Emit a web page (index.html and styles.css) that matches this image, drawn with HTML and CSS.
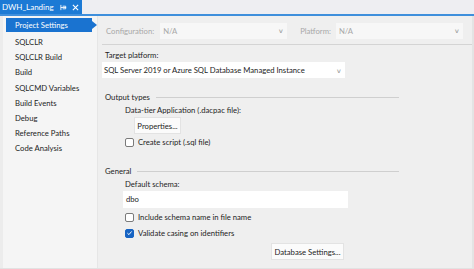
FILE: index.html
```html
<!DOCTYPE html>
<html>
<head>
<meta charset="utf-8">
<link rel="stylesheet" href="styles.css">
</head>
<body>
<div class="tabbar">
  <div class="tab"><span class="tab-title">DWH_Landing</span><svg class="pin" viewBox="0 0 8 8" width="7" height="7"><path d="M1 1 V7 M1 4 H7 M3 2.5 H6.5 V5.5 H3" fill="none" stroke="#fff" stroke-width="1"/></svg><svg class="close" viewBox="0 0 8 8" width="7" height="7"><path d="M1 1 L7 7 M7 1 L1 7" stroke="#fff" stroke-width="1.3"/></svg></div>
</div>
<div class="window">
  <div class="sidebar">
    <div class="nav selected">Project Settings</div>
    <div class="nav">SQLCLR</div>
    <div class="nav">SQLCLR Build</div>
    <div class="nav">Build</div>
    <div class="nav">SQLCMD Variables</div>
    <div class="nav">Build Events</div>
    <div class="nav">Debug</div>
    <div class="nav">Reference Paths</div>
    <div class="nav">Code Analysis</div>
  </div>
  <div class="main">
    <div class="configrow">
      <span class="dim lbl-config">Configuration:</span>
      <div class="combo dim combo-config"><span>N/A</span><span class="chev">&#x2228;</span></div>
      <span class="dim lbl-platform">Platform:</span>
      <div class="combo dim combo-platform"><span>N/A</span><span class="chev">&#x2228;</span></div>
    </div>
    <div class="content">
      <div class="label">Target platform:</div>
      <div class="combo target"><span>SQL Server 2019 or Azure SQL Database Managed Instance</span><span class="chev">&#x2228;</span></div>

      <div class="group group-output"><span>Output types</span><span class="rule"></span></div>
      <div class="indent">
        <div class="label">Data-tier Application (.dacpac file):</div>
        <div class="btn btn-props">Properties...</div>
        <label class="check"><span class="box"></span>Create script (.sql file)</label>
      </div>

      <div class="group group-general"><span>General</span><span class="rule"></span></div>
      <div class="indent">
        <div class="label">Default schema:</div>
        <div class="input">dbo</div>
        <label class="check check-1"><span class="box"></span>Include schema name in file name</label>
        <label class="check check-2"><span class="box on"><svg viewBox="0 0 10 10" width="8" height="8"><path d="M2 5.2 L4.2 7.3 L8 2.8" fill="none" stroke="#fff" stroke-width="1.4"/></svg></span>Validate casing on identifiers</label>
        <div class="btnrow"><div class="btn btn-db">Database Settings...</div></div>
      </div>
    </div>
  </div>
</div>
</body>
</html>
```
FILE: styles.css
```css
* { box-sizing: border-box; }
html, body { margin: 0; padding: 0; }
body {
  width: 474px;
  height: 269px;
  overflow: hidden;
  background: #eeeef2;
  font-family: Lato, "Noto Sans", sans-serif;
  font-size: 7.7px;
  color: #1e1e1e;
  white-space: nowrap;
}
.tabbar {
  height: 16px;
  background: #eeeef2;
  border-bottom: 2px solid #3f8fdc;
  display: flex;
}
.tab {
  background: #1c7ad5;
  color: #fff;
  width: 82px;
  height: 14px;
  display: flex;
  align-items: center;
  padding-left: 2px;
  font-size: 8px;
}
.tab-title { flex: none; }
.pin { margin-left: 6px; flex: none; }
.close { margin-left: 5px; flex: none; }
.window {
  display: flex;
  height: 253px;
  border-bottom: 1px solid #e2e2e2;
}
.sidebar {
  width: 98px;
  background: #f5f5f5;
  border-left: 3px solid #ececec;
  border-right: 1px solid #e6e6e6;
  padding-top: 2px;
}
.nav {
  height: 15.2px;
  line-height: 15.2px;
  padding-left: 9px;
  margin-left: 3px;
  color: #1e1e1e;
}
.nav.selected {
  background: #1a73d0;
  color: #fff;
  width: 86px;
  height: 14px;
  line-height: 14px;
  margin-bottom: 3px;
  position: relative;
}
.nav.selected::after {
  content: "";
  position: absolute;
  right: -5px;
  top: 3px;
  border-left: 5px solid #1a73d0;
  border-top: 4px solid transparent;
  border-bottom: 4px solid transparent;
}
.main {
  flex: 1;
  background: #efefef;
  padding-left: 5px;
  border-right: 2px solid #e4e4e4;
}
.configrow {
  display: flex;
  align-items: center;
  height: 29px;
  padding-top: 1px;
  border-bottom: 1px solid #d4d4d4;
  padding-left: 4px;
  margin-left: -1px;
}
.dim { color: #a8a8a8; }
.combo {
  display: flex;
  align-items: center;
  justify-content: space-between;
  background: #f7f7f7;
  height: 16px;
  padding: 0 4px 0 3px;
}
.chev { font-size: 6px; color: #a0a0a0; transform: scaleX(1.3); }
.combo-config { width: 127px; margin-left: 6px; }
.lbl-platform { margin-left: 13px; }
.combo-platform { width: 127px; margin-left: 5px; }
.label { height: 14px; line-height: 14px; }
.content > .label:first-child { margin-top: 3px; padding-left: 2px; }
.combo.target {
  background: #fff;
  width: 243px;
  height: 16px;
  color: #1e1e1e;
  padding-left: 2px;
  margin-left: -1px;
}
.group {
  display: flex;
  align-items: center;
  width: 296px;
  height: 14px;
  padding-left: 2px;
}
.group-output { margin-top: 12px; }
.group-general { margin-top: 14px; }
.rule { flex: 1; height: 1px; background: #cfcfcf; margin-left: 6px; }
.indent { padding-left: 22px; }
.indent > .label { margin-top: -1px; }
.btn {
  background: #fbfbfb;
  border: 1px solid #e3e3e3;
  display: inline-flex;
  align-items: center;
  justify-content: center;
  height: 17px;
}
.btn-props { width: 47px; margin-left: 9px; margin-top: 0; }
.check { display: flex; align-items: center; height: 16px; }
.box {
  width: 9px; height: 9px;
  border: 1px solid #7a7a7a;
  border-radius: 2px;
  background: #fff;
  margin-right: 4px;
  display: flex; align-items: center; justify-content: center;
}
.box.on { background: #1764c3; border-color: #1764c3; }
.input {
  width: 225px;
  height: 17px;
  background: #fff;
  line-height: 17px;
  padding-left: 3px;
  margin-left: -2px;
  margin-bottom: 1px;
}
.btnrow { padding-left: 146px; margin-top: 2px; }
.btn-db { width: 73px; }
```
